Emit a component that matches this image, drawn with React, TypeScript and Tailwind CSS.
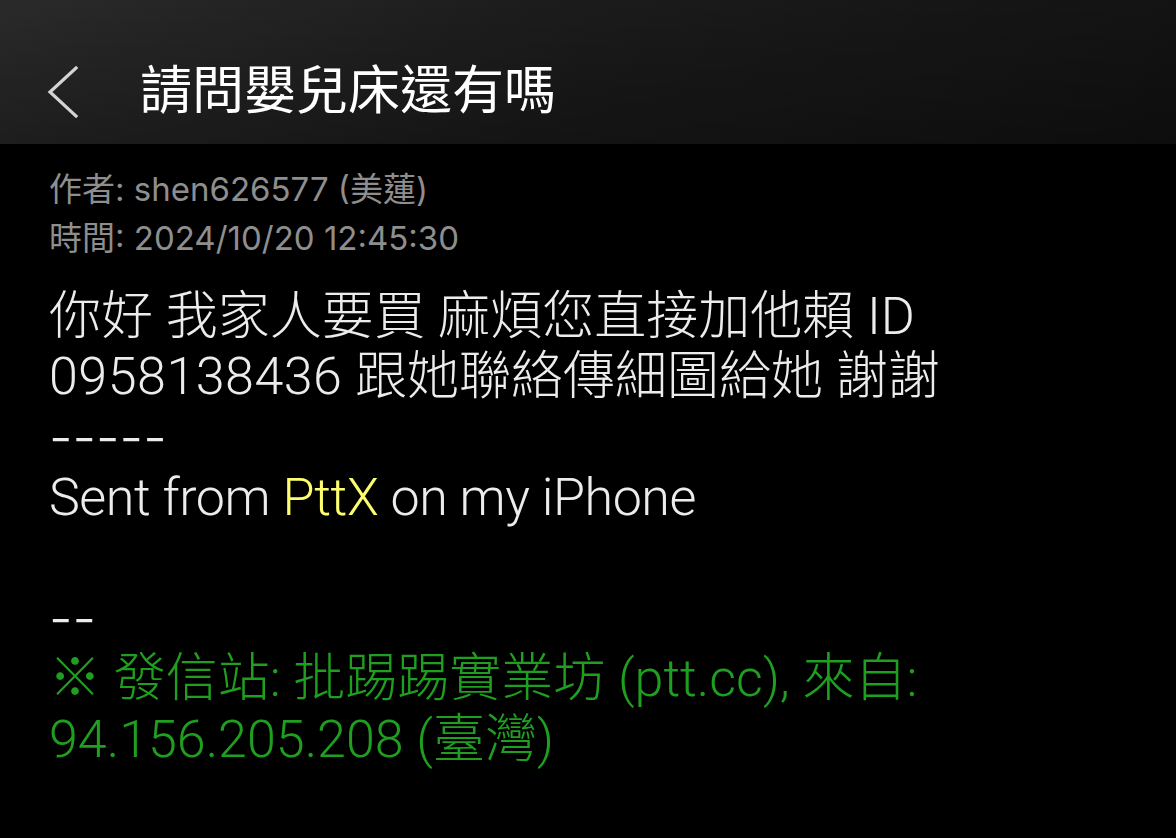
import React from "react";

const font = {
  fontFamily: 'Roboto, "Noto Sans CJK TC", "Noto Sans", sans-serif',
};
const metaFont = {
  fontFamily: 'Inter, "Noto Sans CJK TC", "Noto Sans", sans-serif',
};

export default function App() {
  return (
    <div className="w-[1176px] h-[838px] bg-black overflow-hidden font-light" style={font}>
      <header className="h-[144px] pt-[40px] flex items-center bg-[linear-gradient(to_bottom,rgba(0,0,0,0),rgba(0,0,0,0.3)),linear-gradient(to_right,#2a2a2a,#1b1b1b_50%,#131313)]">
        <div className="w-[140px] pl-[46px] flex items-center">
          <svg width="34" height="52" viewBox="0 0 34 52" fill="none">
            <path d="M30 2 L4 26 L30 50" stroke="#d4d4d4" strokeWidth="3.2" strokeLinecap="square" />
          </svg>
        </div>
        <h1 className="text-[52px] leading-none text-white font-normal">請問嬰兒床還有嗎</h1>
      </header>
      <main className="pl-[49px] pt-[21px]">
        <div className="text-[33px] leading-[49px] text-[#8e8e8e] font-normal" style={metaFont}>
          <div>作者: shen626577 (美蓮)</div>
          <div>時間: 2024/10/20 12:45:30</div>
        </div>
        <div className="mt-[24px] text-[52px] leading-[60.4px] text-[#ececec]">
          <div>你好 我家人要買 麻煩您直接加他賴 ID</div>
          <div>
            <span className="tracking-[0.5px]">0958138436</span> 跟她聯絡傳細圖給她 謝謝
          </div>
          <div style={metaFont}>-----</div>
          <div className="tracking-[-0.45px]">
            Sent from <span className="text-[#fdfd6e]">PttX</span> on my iPhone
          </div>
          <div>&nbsp;</div>
          <div style={metaFont}>--</div>
          <div className="text-[#1f9f1f]">※ 發信站: 批踢踢實業坊 (ptt.cc), 來自:</div>
          <div className="text-[#1f9f1f]">94.156.205.208 (臺灣)</div>
        </div>
      </main>
    </div>
  );
}
